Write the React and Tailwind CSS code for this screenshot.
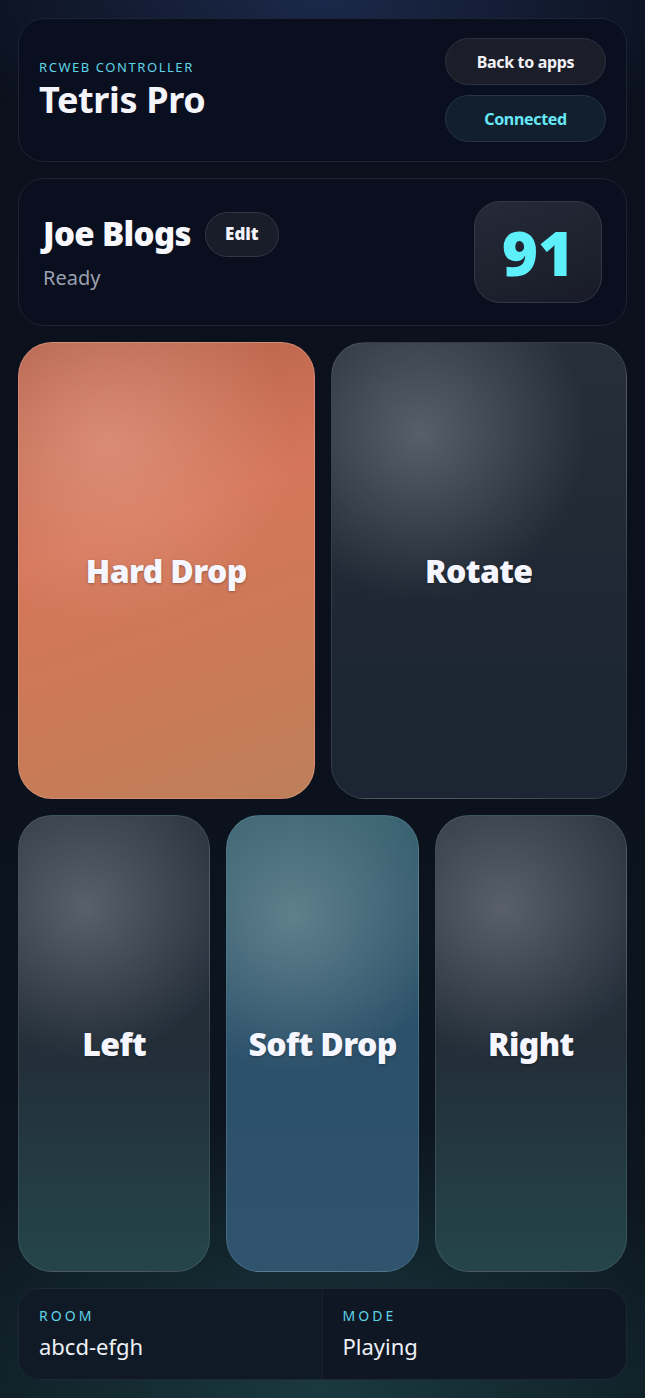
import React from 'react';

const font = "font-['Noto_Sans','Open_Sans',sans-serif]";

const PadButton = ({ label, skin }) => (
    <button
        className={`relative flex items-center justify-center rounded-[34px] border min-h-0 ${skin}`}
    >
        <span className="text-[32px] font-black tracking-[-0.02em] text-[#f5f6ff] [text-shadow:0_1px_3px_rgba(0,0,0,0.3)]">
            {label}
        </span>
    </button>
);

const skins = {
    orange: "border-[rgba(255,210,190,0.25)] bg-[radial-gradient(circle_at_30%_22%,rgba(232,160,140,0.6),rgba(232,160,140,0)_45%),linear-gradient(160deg,#b0604a_0%,#d5765a_40%,#c97a56_75%,#bd7f5a_100%)]",
    dark: "border-[rgba(255,255,255,0.1)] bg-[radial-gradient(circle_at_30%_20%,rgba(110,116,126,0.7),rgba(110,116,126,0)_40%),linear-gradient(180deg,#273039_0%,#1e2733_60%,#1b2533_100%)]",
    darkTeal: "border-[rgba(255,255,255,0.1)] bg-[radial-gradient(circle_at_35%_20%,rgba(110,116,126,0.7),rgba(110,116,126,0)_40%),linear-gradient(180deg,#2c3440_0%,#222d38_50%,#25454b_100%)]",
    blue: "border-[rgba(150,200,230,0.2)] bg-[radial-gradient(circle_at_35%_22%,rgba(110,140,150,0.75),rgba(110,140,150,0)_42%),linear-gradient(180deg,#37606e_0%,#2b506a_50%,#30536e_100%)]",
};

export default function App() {
    return (
        <div className={`${font} h-screen w-full overflow-hidden p-[18px] flex flex-col gap-4 bg-[radial-gradient(ellipse_60%_12%_at_50%_0%,rgba(40,60,110,0.55),rgba(40,60,110,0)),radial-gradient(ellipse_70%_20%_at_50%_100%,rgba(35,80,85,0.6),rgba(35,80,85,0)),linear-gradient(180deg,#0b101d_0%,#0b111c_50%,#0d1820_100%)]`}>

            {/* header */}
            <div className="flex items-center justify-between rounded-[26px] border border-[#1e2433] bg-[#0a0f1f] px-5 py-[19px]">
                <div className="flex flex-col">
                    <p className="text-[13px] tracking-[0.12em] text-[#5fd3e6]">RCWEB CONTROLLER</p>
                    <h1 className="text-[36px] leading-tight font-bold tracking-[-0.01em] text-[#f4f4fb]">Tetris Pro</h1>
                </div>
                <div className="flex flex-col gap-[10px]">
                    <button className="h-[47px] w-[161px] rounded-full border border-[#2c3140] bg-[#1b1d29] text-[16px] font-bold text-[#f2f2f7] tracking-[-0.02em]">
                        Back to apps
                    </button>
                    <button className="h-[47px] w-[161px] rounded-full border border-[#263445] bg-[#12202d] text-[16px] font-bold text-[#67e8f9] tracking-[-0.02em]">
                        Connected
                    </button>
                </div>
            </div>

            {/* player */}
            <div className="flex items-center justify-between rounded-[26px] border border-[#1e2433] bg-[#0a0f1f] px-6 py-[22px]">
                <div className="flex flex-col">
                    <div className="flex items-center gap-[14px]">
                        <span className="text-[33px] leading-tight font-black text-[#f7f7fc] tracking-[-0.02em]">Joe Blogs</span>
                        <button className="h-[45px] w-[74px] rounded-full border border-[#333746] bg-[#191c29] text-[17px] font-black text-[#f4f4fa]">
                            Edit
                        </button>
                    </div>
                    <span className="mt-[6px] text-[20px] text-[#9ba0ae]">Ready</span>
                </div>
                <div className="flex h-[102px] w-[128px] items-center justify-center rounded-[26px] border border-[#343846] bg-[linear-gradient(160deg,#262a38,#181b27)]">
                    <span className="text-[62px] font-black text-[#5ef0fa]">91</span>
                </div>
            </div>

            {/* pad */}
            <div className="grid flex-1 min-h-0 grid-cols-2 gap-4">
                <PadButton label="Hard Drop" skin={skins.orange} />
                <PadButton label="Rotate" skin={skins.dark} />
            </div>
            <div className="grid flex-1 min-h-0 grid-cols-3 gap-4">
                <PadButton label="Left" skin={skins.darkTeal} />
                <PadButton label="Soft Drop" skin={skins.blue} />
                <PadButton label="Right" skin={skins.darkTeal} />
            </div>

            {/* footer */}
            <div className="grid grid-cols-2 overflow-hidden rounded-[22px] border border-[#1f2735] bg-[#0f1724]">
                <div className="flex flex-col gap-[4px] border-r border-[rgba(255,255,255,0.03)] bg-[#101a26] px-5 py-4">
                    <span className="text-[14px] tracking-[0.22em] text-[#5fd3e6]">ROOM</span>
                    <span className="text-[22px] text-[#eef0f6]">abcd-efgh</span>
                </div>
                <div className="flex flex-col gap-[4px] px-5 py-4">
                    <span className="text-[14px] tracking-[0.22em] text-[#5fd3e6]">MODE</span>
                    <span className="text-[22px] text-[#eef0f6]">Playing</span>
                </div>
            </div>
        </div>
    );
}
